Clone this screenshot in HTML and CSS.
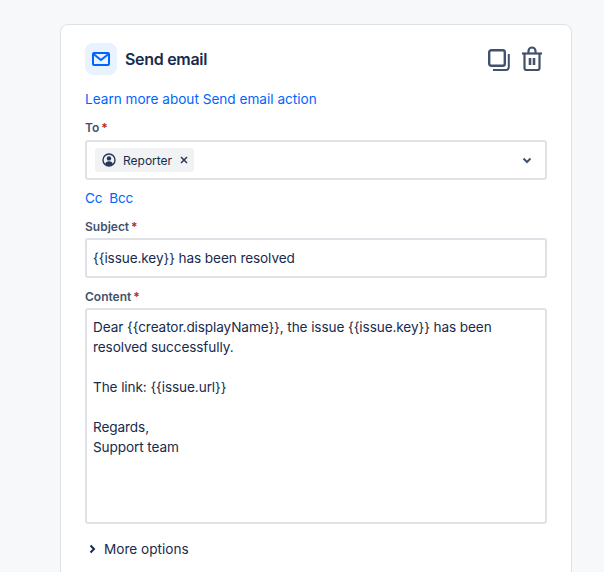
FILE: index.html
```html
<!DOCTYPE html>
<html lang="en">
<head>
    <meta charset="UTF-8">
    <title>Send email</title>
    <link rel="stylesheet" href="styles.css">
</head>
<body>
    <div class="page">
        <div class="card">
            <div class="card-header">
                <div class="action-icon">
                    <svg width="18" height="14" viewBox="0 0 18 14" fill="none" stroke="#0065ff" stroke-width="2" stroke-linejoin="round">
                        <rect x="1" y="1" width="16" height="12" rx="1"/>
                        <path d="M1.500 2 9 8l7.500-6"/>
                    </svg>
                </div>
                <h2 class="card-title">Send email</h2>
                <div class="card-tools">
                    <svg width="24" height="24" viewBox="0 0 24 24" fill="none" stroke="#42526e" stroke-width="2.400" stroke-linejoin="round">
                        <rect x="2.200" y="2.200" width="15.600" height="15.600" rx="2"/>
                        <path d="M21.800 6v13a3 3 0 0 1-3 3H6" stroke-width="2"/>
                    </svg>
                    <svg width="24" height="26" viewBox="0 0 24 26" fill="none" stroke="#42526e" stroke-width="2.200" stroke-linejoin="round">
                        <path d="M2 7.500h20"/>
                        <path d="M8.500 7V5a3.500 3.500 0 0 1 7 0v2"/>
                        <path d="M4.500 8v14a2 2 0 0 0 2 2h11a2 2 0 0 0 2-2V8"/>
                        <path d="M10 12v7M14 12v7" stroke-width="2.600"/>
                    </svg>
                </div>
            </div>

            <a class="link learn-more" href="#">Learn more about Send email action</a>

            <label class="field-label">To<span class="required">*</span></label>
            <div class="field select-field">
                <span class="tag">
                    <svg width="14" height="14" viewBox="0 0 14 14">
                        <circle cx="7" cy="7" r="6" fill="none" stroke="#253858" stroke-width="1.400"/>
                        <circle cx="7" cy="5.400" r="2.200" fill="#253858"/>
                        <path d="M3 11.200c.5-2 2-3 4-3s3.500 1 4 3a6 6 0 0 1-8 0z" fill="#253858"/>
                    </svg>
                    <span class="tag-text">Reporter</span>
                    <svg class="tag-close" width="8" height="8" viewBox="0 0 8 8" stroke="#253858" stroke-width="1.500">
                        <path d="M1 1l6 6M7 1 1 7"/>
                    </svg>
                </span>
                <svg class="chevron" width="10" height="7" viewBox="0 0 10 7" fill="none" stroke="#42526e" stroke-width="2">
                    <path d="M1.500 1.500 5 5l3.500-3.500"/>
                </svg>
            </div>

            <div class="cc-row">
                <a class="link" href="#">Cc</a>
                <a class="link" href="#">Bcc</a>
            </div>

            <label class="field-label">Subject<span class="required">*</span></label>
            <div class="field text-field">{{issue.key}} has been resolved</div>

            <label class="field-label">Content<span class="required">*</span></label>
            <div class="field text-area">Dear {{creator.displayName}}, the issue {{issue.key}} has been resolved successfully.

The link: {{issue.url}}

Regards,
Support team</div>

            <div class="more-options">
                <svg width="7" height="10" viewBox="0 0 7 10" fill="none" stroke="#172b4d" stroke-width="2">
                    <path d="M1.500 1.500 5 5 1.500 8.500"/>
                </svg>
                <span>More options</span>
            </div>
        </div>
    </div>
</body>
</html>
```

FILE: styles.css
```css
html, body {
    height: 100%;
}
body {
    margin: 0;
    background-color: #fff;
    font-family: Inter, "Liberation Sans", sans-serif;
    font-size: 13.6px;
    color: #172b4d;
    overflow: hidden;
}
.page {
    width: 604px;
    height: 572px;
    box-sizing: border-box;
    padding: 24px 32px 0 60px;
    background-color: #f7f8f9;
    overflow: hidden;
}
.card {
    height: 600px;
    box-sizing: border-box;
    padding: 18px 24px 0 24px;
    background-color: #fff;
    border: 1px solid #dfe1e6;
    border-radius: 8px;
}
.card-header {
    display: flex;
    align-items: center;
    height: 32px;
}
.action-icon {
    display: flex;
    justify-content: center;
    align-items: center;
    width: 32px;
    height: 32px;
    margin-right: 8px;
    border-radius: 8px;
    background-color: #e9f2ff;
}
.card-title {
    margin: 0;
    font-size: 16px;
    font-weight: 600;
    letter-spacing: -0.3px;
}
.card-tools {
    display: flex;
    align-items: flex-end;
    gap: 9px;
    margin-left: auto;
    margin-right: 3px;
}
.link {
    color: #0065ff;
    text-decoration: none;
}
.learn-more {
    display: block;
    margin-top: 14px;
    line-height: 20px;
}
.field-label {
    display: block;
    margin-top: 11px;
    font-size: 12px;
    font-weight: 600;
    line-height: 16px;
    color: #42526e;
}
.required {
    margin-left: 2px;
    color: #ae2e24;
}
.field {
    box-sizing: border-box;
    margin-top: 3px;
    background-color: #fff;
    border: 2px solid #dfe1e6;
    border-radius: 3px;
}
.select-field {
    display: flex;
    align-items: center;
    height: 40px;
    margin-top: 4px;
    padding: 0 8px;
}
.tag {
    display: flex;
    align-items: center;
    height: 24px;
    padding: 0 6px 0 7px;
    border-radius: 3px;
    background-color: #f1f2f4;
    font-size: 12px;
}
.tag-text {
    margin-left: 7px;
}
.tag-close {
    margin-left: 8px;
}
.chevron {
    margin-left: auto;
    margin-right: 5px;
}
.cc-row {
    display: flex;
    gap: 7px;
    margin-top: 8px;
    line-height: 20px;
    letter-spacing: -0.2px;
}
.text-field {
    height: 40px;
    padding: 8px 6px;
    line-height: 20px;
    letter-spacing: -0.1px;
}
.text-area {
    height: 216px;
    padding: 7px 6px;
    line-height: 20px;
    letter-spacing: -0.1px;
    white-space: pre-wrap;
}
.more-options {
    display: flex;
    align-items: center;
    gap: 8px;
    margin-top: 15px;
    padding-left: 4px;
    line-height: 20px;
}
```
